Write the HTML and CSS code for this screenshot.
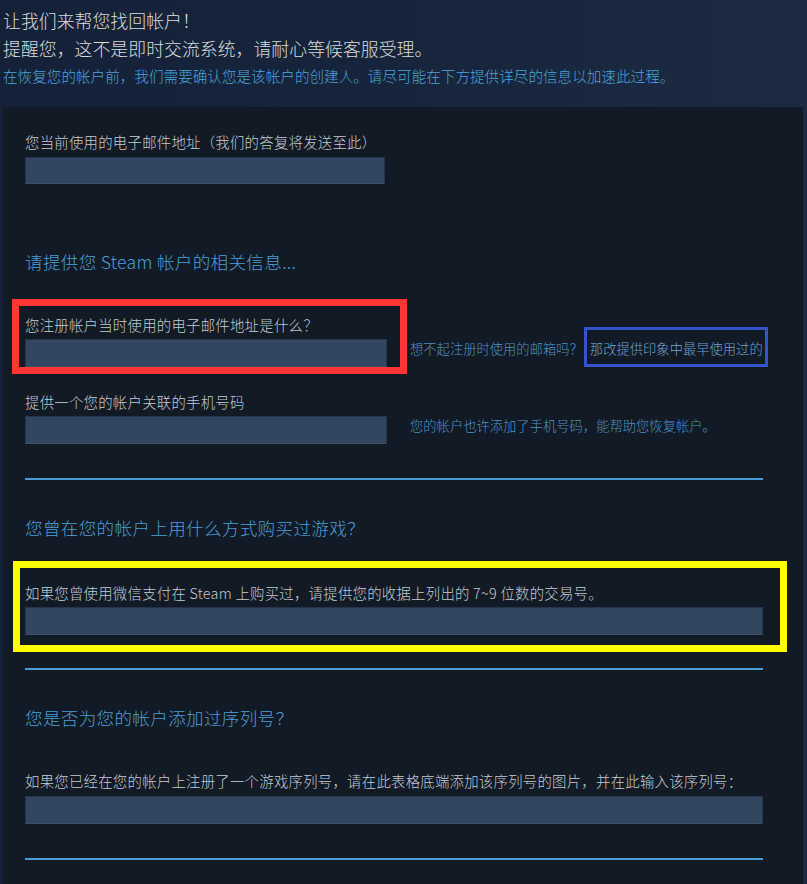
FILE: index.html
```html
<!DOCTYPE html>
<html lang="zh-CN">
<head>
<meta charset="utf-8">
<title>帐户找回</title>
<link rel="stylesheet" href="styles.css">
</head>
<body>
<div class="intro">
  <div class="intro-title">让我们来帮您找回帐户！</div>
  <div class="intro-title">提醒您，这不是即时交流系统，请耐心等候客服受理。</div>
  <div class="intro-note">在恢复您的帐户前，我们需要确认您是该帐户的创建人。请尽可能在下方提供详尽的信息以加速此过程。</div>
</div>
<div class="panel">
  <div class="field first">
    <div class="label">您当前使用的电子邮件地址（我们的答复将发送至此）</div>
    <div class="input w360"></div>
  </div>

  <div class="heading h-first">请提供您 Steam 帐户的相关信息...</div>

  <div class="row row-red">
    <div class="field mark-red">
      <div class="label">您注册帐户当时使用的电子邮件地址是什么？</div>
      <div class="input w362"></div>
    </div>
    <div class="side">
      <span>想不起注册时使用的邮箱吗？</span><span class="mark-blue">那改提供印象中最早使用过的</span>
    </div>
  </div>

  <div class="row row-phone">
    <div class="field">
      <div class="label">提供一个您的帐户关联的手机号码</div>
      <div class="input w362"></div>
    </div>
    <div class="side side-phone">您的帐户也许添加了手机号码，能帮助您恢复帐户。</div>
  </div>

  <div class="rule r1"></div>

  <div class="heading">您曾在您的帐户上用什么方式购买过游戏？</div>

  <div class="field mark-yellow">
    <div class="label">如果您曾使用微信支付在 Steam 上购买过，请提供您的收据上列出的 7~9 位数的交易号。</div>
    <div class="input wfull"></div>
  </div>

  <div class="rule r2"></div>

  <div class="heading">您是否为您的帐户添加过序列号？</div>

  <div class="field key">
    <div class="label">如果您已经在您的帐户上注册了一个游戏序列号，请在此表格底端添加该序列号的图片，并在此输入该序列号：</div>
    <div class="input wfull"></div>
  </div>

  <div class="rule r3"></div>
</div>
</body>
</html>
```
FILE: styles.css
```css
html, body {
  margin: 0;
  padding: 0;
}
body {
  width: 807px;
  height: 884px;
  overflow: hidden;
  background: linear-gradient(to right, #142139 0%, #17253c 50%, #1c2b41 100%);
  font-family: "Noto Sans CJK SC", "Noto Sans", sans-serif;
  font-weight: 300;
}
.intro {
  box-sizing: border-box;
  height: 107px;
  padding: 6px 3px 0;
}
.intro-title {
  font-size: 17.9px;
  line-height: 28px;
  color: #d9dcde;
}
.intro-note {
  font-size: 14.6px;
  line-height: 28px;
  color: #4da3dc;
}
.panel {
  margin: 0 4px 0 3px;
  background: #121a25;
  padding: 0 22px 24px;
}
.field.first {
  padding-top: 25px;
}
.label {
  font-size: 14.4px;
  line-height: 20px;
  letter-spacing: 0.25px;
  color: #c3ccd4;
  white-space: nowrap;
}
.input {
  box-sizing: border-box;
  height: 28px;
  margin-top: 4px;
  background: #32475f;
  border: 1px solid #24344a;
  border-bottom-color: #3a5069;
}
.field.first .input {
  margin-top: 5px;
  height: 27px;
}
.w360 { width: 360px; }
.w362 { width: 362px; }
.wfull { width: 738px; }
.heading {
  font-size: 17.6px;
  line-height: 28px;
  letter-spacing: 0.3px;
  color: #4d9ed8;
  margin-top: 34px;
}
.heading.h-first {
  margin-top: 64px;
}
.row {
  display: flex;
  align-items: flex-end;
}
.row-red {
  margin-top: 30px;
}
.mark-red {
  margin-left: -6px;
  padding: 9px 13px 0 6px;
  outline: 7px solid #fd3535;
}
.side {
  margin-left: 10px;
  font-size: 13.3px;
  line-height: 18px;
  color: #4f93c9;
  display: flex;
  align-items: baseline;
  white-space: nowrap;
}
.mark-blue {
  display: inline-block;
  margin-left: 1px;
  padding: 10px 2px 6px 3px;
  border: 3px solid #3553cd;
  color: #6fa4cf;
}
.row-phone {
  margin-top: 25px;
}
.row-phone .field {
  padding-right: 13px;
}
.side-phone {
  margin-left: 10px;
  margin-bottom: 9px;
}
.rule {
  width: 738px;
  height: 2px;
  background: #4a9bd5;
  margin-top: 34px;
}
.r2 {
  margin-top: 23px;
}
.mark-yellow {
  margin-top: 26px;
  margin-left: -5px;
  padding: 15px 17px 10px 5px;
  width: 738px;
  outline: 7px solid #ffff00;
}
.key {
  margin-top: 39px;
}
.key .input {
  margin-top: 5px;
}
```
